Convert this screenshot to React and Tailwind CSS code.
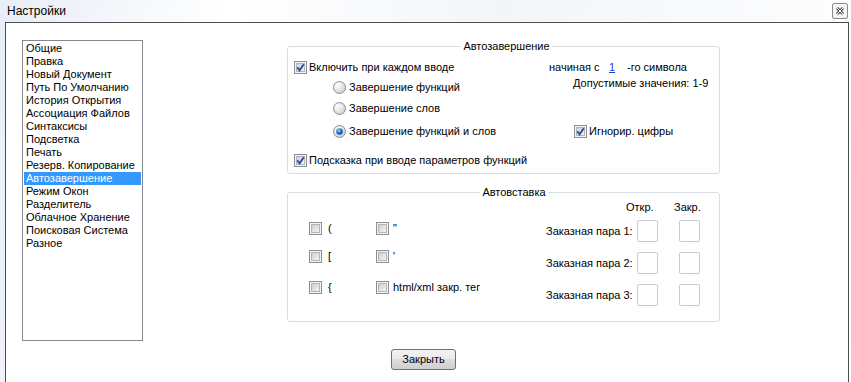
const sections = [
  "Общие",
  "Правка",
  "Новый Документ",
  "Путь По Умолчанию",
  "История Открытия",
  "Ассоциация Файлов",
  "Синтаксисы",
  "Подсветка",
  "Печать",
  "Резерв. Копирование",
  "Автозавершение",
  "Режим Окон",
  "Разделитель",
  "Облачное Хранение",
  "Поисковая Система",
  "Разное",
];

const Check = ({ checked }) => (
  <svg width="13" height="13" viewBox="0 0 13 13" className="shrink-0">
    <defs>
      <linearGradient id="cbFill" x1="0" y1="0" x2="1" y2="1">
        <stop offset="0" stopColor="#c9cdd3" />
        <stop offset="1" stopColor="#f6f6f6" />
      </linearGradient>
    </defs>
    <rect x="0.5" y="0.5" width="12" height="12" fill="#f4f4f4" stroke="#8f8f8f" />
    <rect x="2.5" y="2.5" width="8" height="8" fill="url(#cbFill)" stroke="#b2b6bc" />
    {checked && (
      <path d="M3.3 6.4 L5.6 9.3 L9.8 3.2" stroke="#2d4f9e" strokeWidth="1.9" fill="none" />
    )}
  </svg>
);

const Radio = ({ checked }) => (
  <svg width="13" height="13" viewBox="0 0 13 13" className="shrink-0">
    <defs>
      <radialGradient id="rbFill" cx="0.35" cy="0.3" r="0.8">
        <stop offset="0" stopColor="#ffffff" />
        <stop offset="1" stopColor="#c8ccd2" />
      </radialGradient>
      <radialGradient id="rbDot" cx="0.4" cy="0.35" r="0.7">
        <stop offset="0" stopColor="#8fe0ff" />
        <stop offset="0.5" stopColor="#1e7fd0" />
        <stop offset="1" stopColor="#0b3d85" />
      </radialGradient>
    </defs>
    <circle cx="6.5" cy="6.5" r="6" fill="url(#rbFill)" stroke="#8e8f8f" />
    {checked && <circle cx="6.5" cy="6.5" r="3.3" fill="url(#rbDot)" />}
  </svg>
);

const Box = ({ className = "" }) => (
  <div className={`w-[21px] h-[22px] border border-[#c6cbd1] rounded-[2px] bg-white ${className}`}></div>
);

export default function App() {
  return (
    <div
      className="w-[851px] h-[382px] overflow-hidden text-[11px] leading-[13px] text-black bg-[linear-gradient(100deg,#e8eef6,#ffffff_25%,#f3f5f8_55%,#ffffff)]"
      style={{ fontFamily: '"Liberation Sans", Arial, sans-serif' }}
    >
      {/* title bar */}
      <div className="h-[22px] flex items-center justify-between pl-[7px] pr-[3px]">
        <span className="text-[12px]">Настройки</span>
        <div className="w-[16px] h-[16px] border border-[#8a8a8a] rounded-[2px] bg-[#f4f4f4] flex items-center justify-center">
          <svg width="10" height="10" viewBox="0 0 10 10">
            <path d="M2 2 L8 8 M8 2 L2 8" stroke="#555" strokeWidth="3" />
            <path d="M2 2 L8 8 M8 2 L2 8" stroke="#fff" strokeWidth="1" />
          </svg>
        </div>
      </div>

      {/* window body */}
      <div className="ml-[5px] w-[844px] h-[360px] border-x border-t border-[#4d4d4d] bg-white flex pl-[16px] pt-[17px]">
        <div className="w-[121px] h-[301px] border border-[#828790] bg-white pt-px shrink-0">
          {sections.map((s) => (
            <div
              key={s}
              className={`mx-px pl-[2px] h-[13px] whitespace-nowrap ${
                s === "Автозавершение" ? "bg-[#3399ff] text-white" : ""
              }`}
            >
              {s}
            </div>
          ))}
        </div>

        <div className="ml-[144px] w-[433px] flex flex-col">
          <fieldset className="border border-[#d5dfe5] rounded-[3px] pl-[6px] pb-[6px]">
            <legend className="mx-auto px-[2px] leading-[13px]">Автозавершение</legend>

            <div className="flex items-center h-[13px] mt-[8px]">
              <div className="flex items-center w-[255px]">
                <Check checked />
                <span className="ml-[2px]">Включить при каждом вводе</span>
              </div>
              <span className="w-[60px]">начиная с</span>
              <span className="w-[18px] text-[#1f3fd8] underline">1</span>
              <span>-го символа</span>
            </div>

            <div className="flex h-[17px] mt-[3px]">
              <div className="w-[279px] flex items-end">
                <div className="ml-[39px] flex items-center h-[13px]">
                  <Radio />
                  <span className="ml-[3px]">Завершение функций</span>
                </div>
              </div>
              <span>Допустимые значения: 1-9</span>
            </div>

            <div className="flex items-center h-[13px] mt-[8px] ml-[39px]">
              <Radio />
              <span className="ml-[3px]">Завершение слов</span>
            </div>

            <div className="flex items-center h-[13px] mt-[10px]">
              <div className="w-[280px] flex items-center">
                <div className="ml-[39px] flex items-center">
                  <Radio checked />
                  <span className="ml-[3px]">Завершение функций и слов</span>
                </div>
              </div>
              <Check checked />
              <span className="ml-[2px]">Игнорир. цифры</span>
            </div>

            <div className="flex items-center h-[13px] mt-[16px]">
              <Check checked />
              <span className="ml-[2px]">Подсказка при вводе параметров функций</span>
            </div>
          </fieldset>

          <fieldset className="mt-[12px] border border-[#d5dfe5] rounded-[3px] pl-[21px] pb-[15px]">
            <legend className="mx-auto px-[2px] leading-[13px]">Автовставка</legend>
            <div className="flex">
              <div className="w-[237px] flex flex-col">
                {[
                  ["(", '"', "mt-[23px]"],
                  ["[", "'", "mt-[15px]"],
                  ["{", "html/xml закр. тег", "mt-[18px]"],
                ].map(([a, b, m]) => (
                  <div key={a} className={`flex items-center h-[13px] ${m}`}>
                    <div className="w-[67px] flex items-center">
                      <Check />
                      <span className="ml-[6px]">{a}</span>
                    </div>
                    <Check />
                    <span className="ml-[4px]">{b}</span>
                  </div>
                ))}
              </div>

              <div className="flex flex-col">
                <div className="flex h-[13px] mt-[2px] ml-[80px]">
                  <span className="w-[48px]">Откр.</span>
                  <span>Закр.</span>
                </div>
                {["1", "2", "3"].map((n, i) => (
                  <div key={n} className={`flex items-center h-[22px] ${i === 0 ? "mt-[6px]" : "mt-[10px]"}`}>
                    <span className="w-[91px] whitespace-nowrap">Заказная пара {n}:</span>
                    <Box />
                    <Box className="ml-[21px]" />
                  </div>
                ))}
              </div>
            </div>
          </fieldset>

          <button className="mt-[27px] ml-[104px] w-[65px] h-[21px] border border-[#707070] rounded-[3px] bg-[linear-gradient(#f2f2f2,#ebebeb_45%,#dddddd_50%,#cfcfcf)] flex items-center justify-center">
            Закрыть
          </button>
        </div>
      </div>
    </div>
  );
}
